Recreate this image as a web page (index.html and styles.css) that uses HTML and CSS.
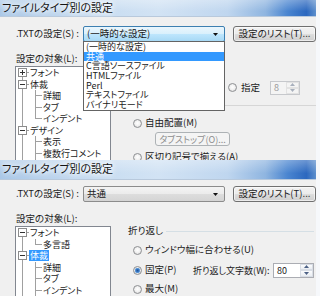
FILE: index.html
```html
<!DOCTYPE html>
<html lang="ja">
<head>
<meta charset="utf-8">
<title>ファイルタイプ別の設定</title>
<link rel="stylesheet" href="styles.css">
</head>
<body>
<div class="win win-top">
  <div class="titlebar"><span class="ttl">ファイルタイプ別の設定</span></div>
  <div class="body">
    <div class="row1">
      <span class="lbl1">.TXTの設定(S) :</span>
      <div class="combo hot">
        <span class="cv">(一時的な設定)</span>
        <svg class="arr" width="5" height="3" viewBox="0 0 5 3"><path d="M0 0h5L2.5 3z" fill="#111"/></svg>
        <ul class="dd">
          <li>(一時的な設定)</li>
          <li class="sel">共通</li>
          <li>C言語ソースファイル</li>
          <li>HTMLファイル</li>
          <li>Perl</li>
          <li>テキストファイル</li>
          <li>バイナリモード</li>
        </ul>
      </div>
      <div class="btn">設定のリスト(T)...</div>
    </div>
    <div class="main">
      <div class="left">
        <div class="lbl2">設定の対象(L):</div>
        <div class="tree">
          <div class="node"><span class="g0 dn h"><svg class="tg" width="9" height="9" viewBox="0 0 9 9"><rect x=".5" y=".5" width="8" height="8" fill="#fff" stroke="#8c8c8c"/><path d="M2 4.5h5M4.5 2v5" stroke="#333"/></svg></span><span class="t">フォント</span></div>
          <div class="node"><span class="g0 up dn h"><svg class="tg" width="9" height="9" viewBox="0 0 9 9"><rect x=".5" y=".5" width="8" height="8" fill="#fff" stroke="#8c8c8c"/><path d="M2 4.5h5" stroke="#333"/></svg></span><span class="t">体裁</span></div>
          <div class="node"><span class="g0 v"></span><span class="g1"></span><span class="t">詳細</span></div>
          <div class="node"><span class="g0 v"></span><span class="g1"></span><span class="t">タブ</span></div>
          <div class="node"><span class="g0 v"></span><span class="g1 last"></span><span class="t">インデント</span></div>
          <div class="node"><span class="g0 up dn h"><svg class="tg" width="9" height="9" viewBox="0 0 9 9"><rect x=".5" y=".5" width="8" height="8" fill="#fff" stroke="#8c8c8c"/><path d="M2 4.5h5" stroke="#333"/></svg></span><span class="t">デザイン</span></div>
          <div class="node"><span class="g0 v"></span><span class="g1"></span><span class="t">表示</span></div>
          <div class="node"><span class="g0 v"></span><span class="g1"></span><span class="t">複数行コメント</span></div>
          <div class="node"><span class="g0 v"></span><span class="g1"></span><span class="t">強調文字列</span></div>
        </div>
      </div>
      <div class="right">
        <div class="panel">
          <span class="rd"></span><span class="rt">指定</span>
          <div class="spin dis"><span class="sv">8</span><span class="sb"><i><svg width="5" height="3" viewBox="0 0 5 3"><path d="M0 3h5L2.5 0z" fill="#a8b0bd"/></svg></i><i><svg width="5" height="3" viewBox="0 0 5 3"><path d="M0 0h5L2.5 3z" fill="#a8b0bd"/></svg></i></span></div>
        </div>
        <div class="rrow free"><span class="rd"></span><span class="rt">自由配置(M)</span></div>
        <div class="btn dis ts">タブストップ(O)...</div>
        <div class="rrow free r3"><span class="rd"></span><span class="rt">区切り記号で揃える(A)</span></div>
      </div>
    </div>
  </div>
</div>

<div class="win win-bot">
  <div class="titlebar"><span class="ttl">ファイルタイプ別の設定</span></div>
  <div class="body">
    <div class="row1">
      <span class="lbl1">.TXTの設定(S) :</span>
      <div class="combo">
        <span class="cv">共通</span>
        <svg class="arr" width="5" height="3" viewBox="0 0 5 3"><path d="M0 0h5L2.5 3z" fill="#111"/></svg>
      </div>
      <div class="btn">設定のリスト(T)...</div>
    </div>
    <div class="main">
      <div class="left">
        <div class="lbl2">設定の対象(L):</div>
        <div class="tree">
          <div class="node"><span class="g0 dn h"><svg class="tg" width="9" height="9" viewBox="0 0 9 9"><rect x=".5" y=".5" width="8" height="8" fill="#fff" stroke="#8c8c8c"/><path d="M2 4.5h5" stroke="#333"/></svg></span><span class="t">フォント</span></div>
          <div class="node"><span class="g0 v"></span><span class="g1 last"></span><span class="t">多言語</span></div>
          <div class="node"><span class="g0 up dn h"><svg class="tg" width="9" height="9" viewBox="0 0 9 9"><rect x=".5" y=".5" width="8" height="8" fill="#fff" stroke="#8c8c8c"/><path d="M2 4.5h5" stroke="#333"/></svg></span><span class="t sel">体裁</span></div>
          <div class="node"><span class="g0 v"></span><span class="g1"></span><span class="t">詳細</span></div>
          <div class="node"><span class="g0 v"></span><span class="g1"></span><span class="t">タブ</span></div>
          <div class="node"><span class="g0 v"></span><span class="g1"></span><span class="t">インデント</span></div>
        </div>
      </div>
      <div class="right">
        <div class="group">
          <div class="gh"><span class="gt">折り返し</span><span class="gl"></span></div>
          <div class="rrow g1r"><span class="rd"></span><span class="rt">ウィンドウ幅に合わせる(U)</span></div>
          <div class="rrow g2r"><span class="rd on"></span><span class="rt fx">固定(P)</span><span class="rt sm">折り返し文字数(W):</span>
            <div class="spin wide"><span class="sv">80</span><span class="sb"><i><svg width="5" height="3" viewBox="0 0 5 3"><path d="M0 3h5L2.5 0z" fill="#4d6185"/></svg></i><i><svg width="5" height="3" viewBox="0 0 5 3"><path d="M0 0h5L2.5 3z" fill="#4d6185"/></svg></i></span></div>
          </div>
          <div class="rrow g3r"><span class="rd"></span><span class="rt">最大(M)</span></div>
        </div>
      </div>
    </div>
  </div>
</div>
</body>
</html>
```
FILE: styles.css
```css
* { box-sizing: border-box; margin: 0; padding: 0; }
html, body { width: 320px; height: 296px; overflow: hidden; }
body {
  background: #f6f8fb;
  font-family: "Noto Sans CJK JP", "Noto Sans", sans-serif;
  font-size: 9px;
  line-height: 1;
  color: #1a1a1a;
  font-feature-settings: "palt";
}
ul { list-style: none; }

.win {
  width: 316px;
  background: #f0f0f0;
  overflow: hidden;
  display: flex;
  flex-direction: column;
}
.win-top { height: 160px; }
.win-bot { height: 136px; }

.titlebar {
  flex: none;
  display: flex;
  align-items: center;
  padding-left: 2px;
  font-size: 11px;
  color: #141414;
  background:
    linear-gradient(180deg, rgba(255,255,255,.30), rgba(255,255,255,0) 70%),
    linear-gradient(90deg, #a9c7e7 0%, #c4daf0 25%, #d2e3f4 50%, #bfd6ef 72%, #8fb5e0 84%, #4a85d0 91%, #2c68bf 97%, #5d8fcc 100%);
  border-bottom: 1px solid #b8c9dc;
}
.ttl { text-shadow: 0 0 4px #fff, 0 0 7px #fff, 0 0 10px #fff; }
.win-top .titlebar { height: 17px; padding-bottom: 2px; }
.win-bot .titlebar { height: 20px; padding-bottom: 3px; }

.body { padding-left: 15px; flex: 1; display: flex; flex-direction: column; }

.row1 { display: flex; align-items: center; height: 16px; flex: none; }
.win-top .row1 { margin-top: 9px; }
.win-bot .row1 { margin-top: 6px; }
.lbl1 { width: 68px; padding-left: 1px; flex: none; font-size: 9.5px; }

.combo {
  position: relative;
  width: 142px;
  height: 16px;
  flex: none;
  display: flex;
  align-items: center;
  padding: 0 6px 0 3px;
  border: 1px solid #8c8c8c;
  border-radius: 2px;
  background: linear-gradient(#f4f4f4 0%, #ebebeb 50%, #dddddd 51%, #d4d4d4 100%);
}
.combo.hot {
  border-color: #3c7fb1;
  background: linear-gradient(#eaf6fd 0%, #d9f0fc 50%, #bee6fd 51%, #a7d9f5 100%);
}
.cv { flex: 1; font-size: 9.5px; }
.arr { flex: none; }

.dd {
  position: absolute;
  left: -1px;
  top: 14px;
  width: 142px;
  background: #fff;
  border: 1px solid #646464;
  z-index: 5;
}
.dd li { height: 9.7px; line-height: 9.7px; padding-left: 2px; white-space: nowrap; }
.dd li.sel { background: #3399ff; color: #fff; }

.btn {
  flex: none;
  width: 83px;
  height: 16px;
  margin-left: 8px;
  display: flex;
  align-items: center;
  justify-content: center;
  border: 1px solid #707070;
  border-radius: 3px;
  background: linear-gradient(#f2f2f2 0%, #ebebeb 50%, #dddddd 51%, #cfcfcf 100%);
  box-shadow: inset 0 0 0 1px rgba(255,255,255,.6);
  font-size: 9.5px;
}
.btn.dis {
  border-color: #adb2b5;
  background: #f4f4f4;
  color: #8d8d8d;
  box-shadow: none;
  font-size: 9px;
}

.main { display: flex; margin-top: 11px; flex: 1; }
.left { width: 96px; flex: none; display: flex; flex-direction: column; }
.lbl2 { height: 10px; line-height: 10px; padding-left: 1px; font-size: 9.5px; }
.tree {
  margin-top: 3px;
  height: 130px;
  background: #fff;
  border: 1px solid #828790;
  overflow: hidden;
}

.node { height: 11.5px; display: flex; align-items: center; white-space: nowrap; }
.g0, .g1 { width: 13px; height: 100%; flex: none; display: flex; align-items: center; justify-content: flex-start; padding-left: 2px; }
.g0 .tg { display: block; }
.g0.h { background: linear-gradient(#a0a0a0, #a0a0a0) 6px 50% / 7px 1px no-repeat; }
.g0.up { background-image: linear-gradient(#a0a0a0, #a0a0a0), linear-gradient(#a0a0a0, #a0a0a0); background-position: 6px 50%, 6px 0; background-size: 7px 1px, 1px 50%; background-repeat: no-repeat; }
.g0.dn { background-image: linear-gradient(#a0a0a0, #a0a0a0), linear-gradient(#a0a0a0, #a0a0a0); background-position: 6px 50%, 6px 100%; background-size: 7px 1px, 1px 50%; background-repeat: no-repeat; }
.g0.up.dn { background-image: linear-gradient(#a0a0a0, #a0a0a0), linear-gradient(#a0a0a0, #a0a0a0); background-position: 6px 50%, 6px 0; background-size: 7px 1px, 1px 100%; background-repeat: no-repeat; }
.g0.v { background: linear-gradient(#a0a0a0, #a0a0a0) 6px 0 / 1px 100% no-repeat; }
.g1 {
  background-image: linear-gradient(#a0a0a0, #a0a0a0), linear-gradient(#a0a0a0, #a0a0a0);
  background-position: 6px 0, 6px 50%;
  background-size: 1px 100%, 7px 1px;
  background-repeat: no-repeat;
}
.g1.last { background-size: 1px 50%, 7px 1px; }
.t { padding: 1px; line-height: 9px; }
.t.sel { background: #3399ff; color: #fff; }

.right { flex: 1; display: flex; flex-direction: column; min-width: 0; }

.panel {
  margin-top: 17px;
  height: 36px;
  border-bottom: 1px solid #d6d6d6;
  display: flex;
  align-items: center;
  padding-left: 117px;
  flex: none;
}
.rd {
  width: 9px;
  height: 9px;
  flex: none;
  border-radius: 50%;
  border: 1px solid #8e9093;
  background: radial-gradient(circle at 50% 45%, #ffffff 0, #f2f2f2 45%, #d2d2d2 100%);
}
.rd.on {
  background:
    radial-gradient(circle at 50% 50%, #1f5397 0, #3a78c3 1.5px, #79b0e6 2.6px, rgba(255,255,255,0) 3px),
    radial-gradient(circle at 50% 45%, #ffffff 0, #f2f2f2 45%, #d2d2d2 100%);
}
.rt { margin-left: 3px; white-space: nowrap; font-size: 9.5px; }
.rt.sm { font-size: 9px; }
.panel .rt { margin-left: 4px; }

.spin {
  display: flex;
  height: 14px;
  border: 1px solid #abadb3;
  background: #fff;
  flex: none;
}
.panel .spin { width: 30px; margin-left: 10px; }
.spin.dis { background: #f4f4f4; border-color: #c6c8cc; color: #9a9a9a; }
.sv { flex: 1; display: flex; align-items: center; padding-left: 3px; }
.sb { width: 13px; flex: none; display: flex; flex-direction: column; }
.sb i {
  flex: 1;
  display: flex;
  align-items: center;
  justify-content: center;
  border: 1px solid #d8dde5;
  background: linear-gradient(#fbfcfd, #e9edf2);
}
.spin.dis .sb i { background: #f4f4f4; border-color: #e2e2e2; }

.rrow { height: 12px; display: flex; align-items: center; flex: none; }
.free { margin-top: 11px; padding-left: 22px; }
.btn.ts { margin-left: 44px; margin-top: 3px; width: 75px; height: 14px; }
.r3 { margin-top: 5px; }

.group { margin: 13px 2px 0 9px; display: flex; flex-direction: column; }
.gh { height: 10px; display: flex; align-items: center; padding-left: 8px; }
.gt { white-space: nowrap; font-size: 9.5px; }
.gl { flex: 1; height: 1px; background: #d5dfe5; margin-left: 3px; }
.g1r { margin-top: 8px; padding-left: 13px; }
.g2r { margin-top: 8px; padding-left: 13px; }
.g3r { margin-top: 7px; padding-left: 13px; }
.rt.fx { width: 45px; flex: none; }
.spin.wide { width: 41px; height: 15px; margin-left: auto; }
```
